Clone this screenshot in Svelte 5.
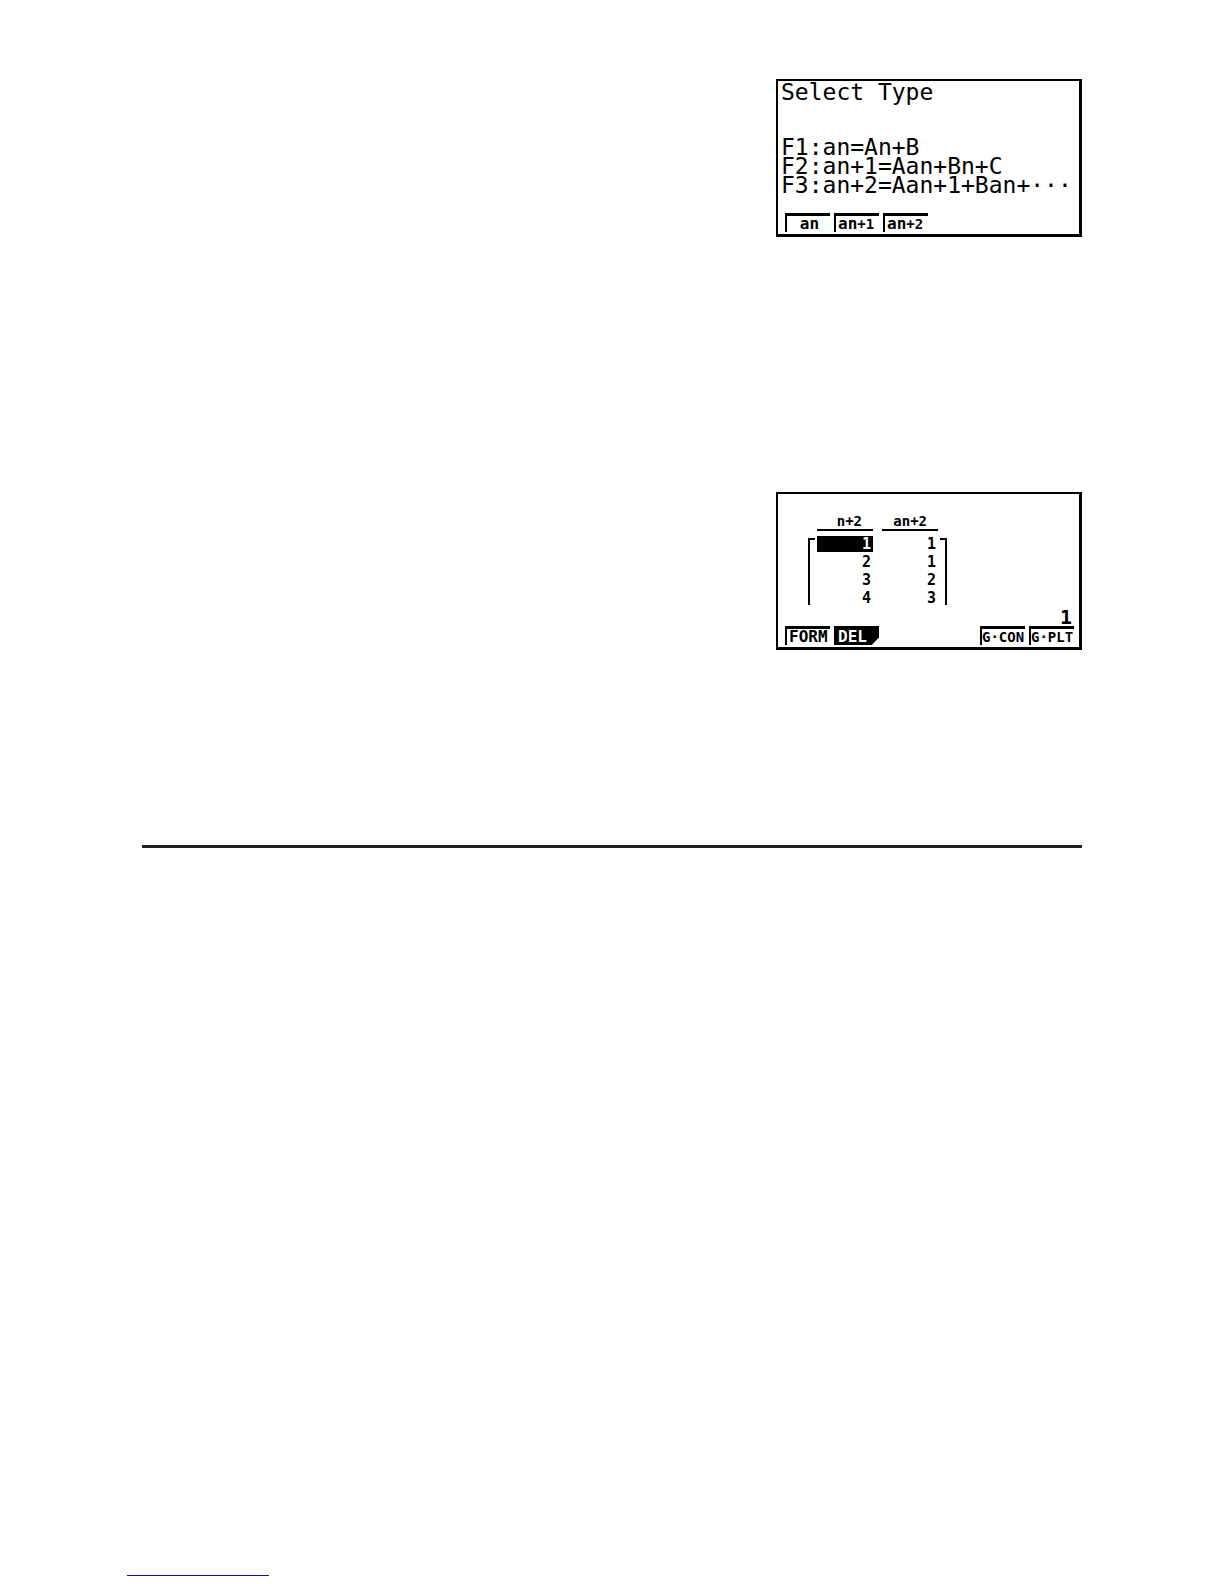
<script lang="ts">
  const types: string[] = ['F1:an=An+B', 'F2:an+1=Aan+Bn+C', 'F3:an+2=Aan+1+Ban+···'];

  const typeKeys = [
    { base: 'an', sub: '' },
    { base: 'an', sub: '+1' },
    { base: 'an', sub: '+2' }
  ];

  const rows = [
    { n: 1, value: 1 },
    { n: 2, value: 1 },
    { n: 3, value: 2 },
    { n: 4, value: 3 }
  ];

  let selected = $state(1);
</script>

<main class="page">
  <section class="screen select-type">
    <h2>Select Type</h2>
    <ul>
      {#each types as type}
        <li>{type}</li>
      {/each}
    </ul>
    <div class="keys">
      {#each typeKeys as key}
        <button class="key" class:centered={!key.sub}>{key.base}<small>{key.sub}</small></button>
      {/each}
    </div>
  </section>

  <section class="screen table-screen">
    <div class="grid">
      <div class="bracket left"></div>
      <table>
        <thead>
          <tr>
            <th scope="col"><span>n+2</span></th>
            <th scope="col"><span>an+2</span></th>
          </tr>
        </thead>
        <tbody>
          {#each rows as row}
            <tr onclick={() => (selected = row.n)}>
              <td><span class:active={row.n === selected}>{row.n}</span></td>
              <td><span>{row.value}</span></td>
            </tr>
          {/each}
        </tbody>
      </table>
      <div class="bracket right"></div>
    </div>
    <output>{selected}</output>
    <div class="keys">
      <button class="key">FORM</button>
      <button class="key filled">DEL</button>
      <button class="key long push">G·CON</button>
      <button class="key long">G·PLT</button>
    </div>
  </section>

  <hr class="divider" />
  <hr class="link-line" />
</main>

<style>
  :global(body) {
    margin: 0;
    background: #fff;
  }
  .page {
    display: flex;
    flex-direction: column;
    align-items: flex-end;
    padding: 79px 142px 8px;
    color: #000;
    font-family: "DejaVu Sans Mono", monospace;
  }
  .screen {
    display: flex;
    flex-direction: column;
    box-sizing: border-box;
    width: 306px;
    min-height: 158px;
    border: solid #000;
    border-width: 2px 3px 3px 2px;
    padding-bottom: 2px;
  }
  .select-type h2 {
    margin: 0 0 35px;
    padding-left: 3px;
    font-size: 23px;
    line-height: 22px;
    font-weight: normal;
  }
  .select-type ul {
    margin: 0;
    padding: 0 0 0 3px;
    list-style: none;
    font-size: 23px;
    line-height: 19px;
    white-space: nowrap;
  }
  .keys {
    display: flex;
    gap: 4px;
    margin-top: auto;
    padding: 0 5px 0 7px;
  }
  .key {
    box-sizing: border-box;
    width: 45px;
    height: 19px;
    margin: 0;
    padding: 0 0 0 2px;
    border: solid #000;
    border-width: 3px 0 0 2px;
    background: none;
    color: #000;
    font-family: inherit;
    font-size: 16px;
    line-height: 16px;
    font-weight: bold;
    text-align: left;
    white-space: nowrap;
  }
  .key.centered {
    text-align: center;
  }
  .key.long {
    padding-left: 0;
    font-size: 14px;
  }
  .key small {
    font-size: 14px;
  }
  .key.filled {
    background: #000;
    color: #fff;
    clip-path: polygon(0 0, 100% 0, 100% 60%, 84% 100%, 0 100%);
  }
  .key.push {
    margin-left: auto;
  }
  .table-screen {
    margin-top: 255px;
  }
  .grid {
    display: flex;
    align-items: flex-end;
    padding: 19px 0 0 30px;
  }
  .bracket {
    box-sizing: border-box;
    width: 7px;
    height: 67px;
    margin-bottom: 3px;
    border: 0 solid #000;
    border-top-width: 2px;
  }
  .bracket.left {
    border-left-width: 2px;
    margin-right: 2px;
  }
  .bracket.right {
    border-right-width: 2px;
    margin-left: 2px;
  }
  table {
    border-collapse: collapse;
    font-size: 15px;
    font-weight: bold;
    text-align: right;
  }
  th,
  td {
    padding: 0;
  }
  th:first-child,
  td:first-child {
    padding-right: 9px;
  }
  th span,
  td span {
    display: block;
    box-sizing: border-box;
    width: 56px;
  }
  th {
    padding-bottom: 5px;
  }
  th span {
    padding-right: 11px;
    border-bottom: 2px solid #000;
    font-size: 14px;
    line-height: 16px;
    text-align: right;
  }
  td {
    height: 18px;
    vertical-align: top;
  }
  td span {
    padding-right: 2px;
    line-height: 16px;
  }
  td .active {
    background: #000;
    color: #fff;
  }
  output {
    padding-right: 7px;
    font-size: 20px;
    line-height: 18px;
    font-weight: bold;
    text-align: right;
  }
  .divider {
    width: 100%;
    height: 3px;
    margin: 195px 0 0;
    border: 0;
    background: #231f20;
  }
  .link-line {
    align-self: flex-start;
    width: 142px;
    height: 1px;
    margin: 727px 0 0 -15px;
    border: 0;
    background: #10109a;
  }
</style>
